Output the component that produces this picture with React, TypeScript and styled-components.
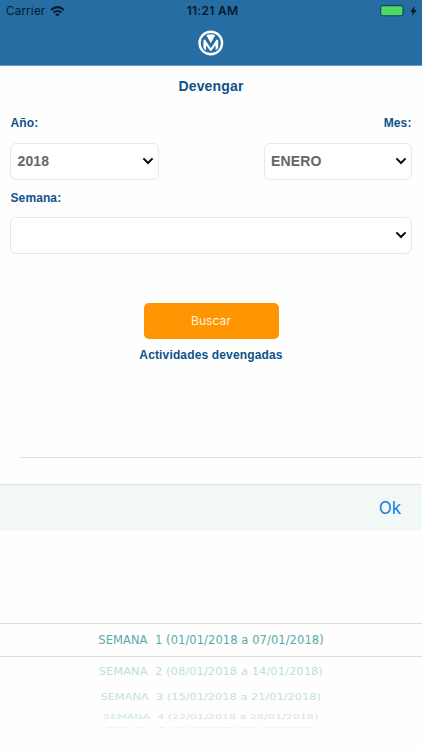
import React from "react";
import styled, { createGlobalStyle } from "styled-components";

const GlobalStyle = createGlobalStyle`
  * { box-sizing: border-box; }
  html, body { margin: 0; background: #fefefe; }
  body { font-family: "Liberation Sans", Arial, sans-serif; overflow: hidden; }
`;

const Screen = styled.div`
  width: 422px;
  height: 750px;
  display: flex;
  flex-direction: column;
  overflow: hidden;
  background: #fefefe;
`;

const Header = styled.header`
  height: 66px;
  flex: none;
  background: #256da3;
  border-bottom: 1px solid #6c9dc3;
`;

const StatusBar = styled.div`
  height: 22px;
  display: grid;
  grid-template-columns: 1fr auto 1fr;
  align-items: center;
  padding: 0 5px 0 6px;
  font-family: Inter, sans-serif;
  font-size: 12px;
  color: #07192b;
`;

const StatusGroup = styled.div<{ $end?: boolean }>`
  display: flex;
  align-items: center;
  justify-content: ${(p) => (p.$end ? "flex-end" : "flex-start")};
  gap: ${(p) => (p.$end ? 4 : 5)}px;
  padding-bottom: ${(p) => (p.$end ? 1 : 0)}px;
`;

const Carrier = styled.span`
  font-size: 11.6px;
  letter-spacing: 0.2px;
`;

const Clock = styled.span`
  padding: 0 0 1px 2px;
  font-size: 12px;
  font-weight: 600;
  letter-spacing: 0.3px;
`;

const LogoRow = styled.div`
  display: flex;
  justify-content: center;
  padding-top: 8px;
`;

const Form = styled.main`
  height: 391px;
  flex: none;
  display: flex;
  flex-direction: column;
  padding: 0 10px;
`;

const Title = styled.h1`
  margin: 12px 0 0;
  font-size: 14px;
  line-height: 17px;
  letter-spacing: 0.18px;
  color: #0f518c;
  text-align: center;
`;

const LabelRow = styled.div<{ $top: number; $gap: number }>`
  display: flex;
  justify-content: space-between;
  margin: ${(p) => p.$top}px 0 ${(p) => p.$gap}px;
  padding: 0 0.5px;
`;

const Label = styled.label`
  font-size: 12px;
  font-weight: bold;
  line-height: 16px;
  letter-spacing: 0.1px;
  color: #0f518c;
`;

const FieldRow = styled.div`
  display: flex;
  justify-content: space-between;
`;

const Field = styled.div<{ $wide?: boolean }>`
  width: ${(p) => (p.$wide ? "402px" : "148.5px")};
  height: 37px;
  display: flex;
  align-items: center;
  justify-content: space-between;
  padding: 0 4px 1px 6.5px;
  border: 1px solid #e9e9e9;
  border-radius: 6px;
  background: #fff;
  font-size: 14px;
  font-weight: bold;
  letter-spacing: 0.12px;
  color: #666;
`;

const SearchButton = styled.button`
  width: 135px;
  height: 36px;
  margin: 48.5px 0 0 133.5px;
  padding: 0 0 1px;
  border: 0;
  border-radius: 5px;
  background: #ff9502;
  color: #fff3df;
  font-family: Inter, sans-serif;
  font-size: 12px;
  letter-spacing: 0.1px;
`;

const ResultsTitle = styled.h2`
  margin: 8.5px 0 0;
  font-size: 12px;
  line-height: 17px;
  letter-spacing: 0.15px;
  text-align: center;
  color: #0f518c;
`;

const Separator = styled.div`
  height: 1px;
  flex: none;
  margin-left: 20px;
  background: #e1e1e1;
`;

const PickerBar = styled.div`
  height: 46px;
  flex: none;
  margin-top: 26px;
  display: flex;
  align-items: center;
  justify-content: flex-end;
  padding: 0 21px 0 0;
  border-top: 1px solid #dce2e0;
  background: #f1f8f5;
`;

const OkButton = styled.button`
  border: 0;
  padding: 0;
  background: transparent;
  color: #1479e0;
  font-family: Inter, sans-serif;
  font-size: 17px;
`;

const Wheel = styled.div`
  padding-top: 93px;
  font-family: "DejaVu Sans", Verdana, sans-serif;
  font-size: 11.5px;
  letter-spacing: 0.07px;
`;

const WheelRow = styled.div<{ $height: number; $selected?: boolean; $color: string }>`
  height: ${(p) => p.$height}px;
  display: flex;
  align-items: center;
  justify-content: center;
  border: 0 solid #dedede;
  border-width: ${(p) => (p.$selected ? "1px 0" : "0")};
  color: ${(p) => p.$color};
`;

const WheelText = styled.span<{ $sx: number; $sy: number }>`
  white-space: pre;
  line-height: 14px;
  padding-bottom: 1px;
  flex: none;
  transform: scale(${(p) => p.$sx}, ${(p) => p.$sy});
`;

const weeks = [
  { text: "SEMANA  1 (01/01/2018 a 07/01/2018)", height: 34, sx: 1, sy: 1, color: "#5aaaa8", selected: true },
  { text: "SEMANA  2 (08/01/2018 a 14/01/2018)", height: 28, sx: 0.995, sy: 0.94, color: "#bddedc" },
  { text: "SEMANA  3 (15/01/2018 a 21/01/2018)", height: 25, sx: 0.978, sy: 0.8, color: "#c5e0de" },
  { text: "SEMANA  4 (22/01/2018 a 28/01/2018)", height: 14, sx: 0.954, sy: 0.56, color: "#d0e5e3" },
  { text: "SEMANA  5 (29/01/2018 a 04/02/2018)", height: 6, sx: 0.93, sy: 0.18, color: "#e4f0ef" },
];

const Chevron = () => (
  <svg width="12" height="8" viewBox="0 0 12 8" fill="none">
    <path d="M1.4 1.4 6 6l4.6-4.6" stroke="#080808" strokeWidth="2" />
  </svg>
);

const Wifi = () => (
  <svg width="15" height="11" viewBox="0 0 15 11" fill="none" stroke="#07192b">
    <path d="M1 4Q7.5-1.7 14 4" strokeWidth="2" />
    <path d="M3.5 6.6Q7.5 3.2 11.5 6.6" strokeWidth="1.9" />
    <path d="M5.2 8.3Q7.5 6.6 9.8 8.3L7.5 10.6Z" fill="#07192b" stroke="none" />
  </svg>
);

const Battery = () => (
  <svg width="27" height="12" viewBox="0 0 27 12">
    <rect x="1.6" y=".6" width="22.4" height="10.2" rx="2" fill="#4bd865" stroke="#124466" strokeWidth="1.1" />
    <path d="M25.4 4Q26.8 5.5 25.4 7Z" fill="#124466" />
  </svg>
);

const Bolt = () => (
  <svg width="7" height="10" viewBox="0 0 7 10">
    <path d="M4.7 0 .3 5.7h2.5L1.9 10l4.8-6H4z" fill="#07131f" />
  </svg>
);

const Logo = () => (
  <svg width="26" height="26" viewBox="0 0 26 26">
    <circle cx="12.8" cy="13" r="11.3" fill="none" stroke="#fff" strokeWidth="2.4" />
    <path d="M5.4 17.8V10.4L6.8 9.2 12.8 18.2 18.8 9.2 20.2 10.4V17.8Q19.4 19.3 17.6 20.3V15.2L12.8 21.6 8 15.2V20.3Q6.2 19.3 5.4 17.8Z" fill="#fff" />
    <path d="M8.4 5.2Q12.8 3.2 17.2 5.2L12.8 13.2Z" fill="#fff" />
  </svg>
);

export default function App() {
  return (
    <Screen>
      <GlobalStyle />
      <Header>
        <StatusBar>
          <StatusGroup><Carrier>Carrier</Carrier><Wifi /></StatusGroup>
          <Clock>11:21 AM</Clock>
          <StatusGroup $end><Battery /><Bolt /></StatusGroup>
        </StatusBar>
        <LogoRow><Logo /></LogoRow>
      </Header>
      <Form>
        <Title>Devengar</Title>
        <LabelRow $top={20} $gap={12}><Label>Año:</Label><Label>Mes:</Label></LabelRow>
        <FieldRow>
          <Field>2018<Chevron /></Field>
          <Field>ENERO<Chevron /></Field>
        </FieldRow>
        <LabelRow $top={10} $gap={11}><Label>Semana:</Label></LabelRow>
        <Field $wide><span /><Chevron /></Field>
        <SearchButton>Buscar</SearchButton>
        <ResultsTitle>Actividades devengadas</ResultsTitle>
      </Form>
      <Separator />
      <PickerBar><OkButton>Ok</OkButton></PickerBar>
      <Wheel>
        {weeks.map((week) => (
          <WheelRow key={week.text} $height={week.height} $selected={week.selected} $color={week.color}>
            <WheelText $sx={week.sx} $sy={week.sy}>{week.text}</WheelText>
          </WheelRow>
        ))}
      </Wheel>
    </Screen>
  );
}
